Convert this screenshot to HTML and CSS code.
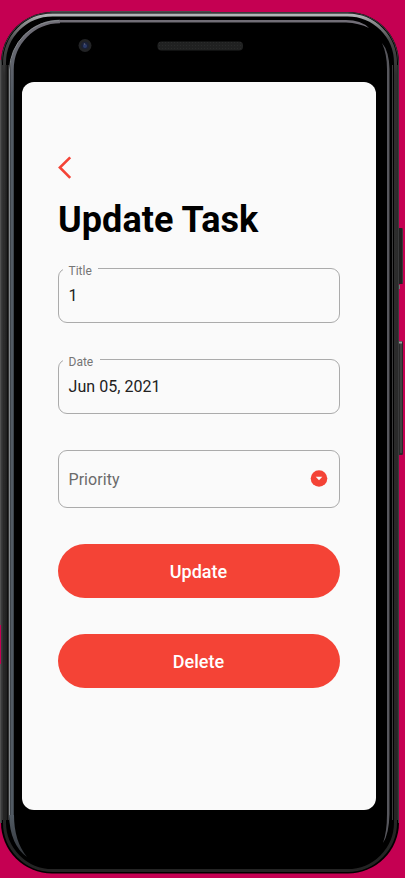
FILE: index.html
```html
<!DOCTYPE html>
<html lang="en">
<head>
<meta charset="utf-8">
<title>Update Task</title>
<link rel="stylesheet" href="styles.css">
</head>
<body>
<svg class="device" width="405" height="878" viewBox="0 0 405 878" aria-hidden="true">
  <defs>
    <linearGradient id="rim" x1="0" y1="0" x2="0" y2="1">
      <stop offset="0" stop-color="#b4b6b8"/>
      <stop offset=".008" stop-color="#8c8e90"/>
      <stop offset=".03" stop-color="#48494a"/>
      <stop offset=".07" stop-color="#2f2f2f"/>
      <stop offset="1" stop-color="#242424"/>
    </linearGradient>
    <linearGradient id="slate" gradientUnits="userSpaceOnUse" x1="0" y1="20" x2="0" y2="100">
      <stop offset="0" stop-color="#716e77"/>
      <stop offset="1" stop-color="#515a63"/>
    </linearGradient>
    <linearGradient id="fade" gradientUnits="userSpaceOnUse" x1="0" y1="815" x2="0" y2="858">
      <stop offset="0" stop-color="#515a63"/>
      <stop offset="1" stop-color="#303338"/>
    </linearGradient>
    <pattern id="mesh" width="3" height="3" patternUnits="userSpaceOnUse">
      <rect width="3" height="3" fill="#202121"/><rect width="1" height="1" fill="#2a2b2b"/>
    </pattern>
  </defs>
  <path d="M0 60h3v565H0zM0 664h3v159H0z" fill="#515151"/>
  <rect x="398" y="228" width="5" height="56" rx="1.5" fill="#202020"/>
  <path d="M402.500 229v54" stroke="#383838"/>
  <path d="M399.500 285v4" stroke="#777"/>
  <rect x="398" y="341" width="5" height="114" rx="1.5" fill="#292929"/>
  <path d="M401 343v110" stroke="#5a5a5a"/>
  <path d="M399 342.500h3" stroke="#999" stroke-width="2"/>
  <rect x="1" y="12" width="398" height="861.500" rx="51" fill="#000"/>
  <path d="M50 11.500H211" stroke="#4c4c4e"/>
  <path d="M1.500 823V63A50.500 50.500 0 0 1 52 12.500H348A50.500 50.500 0 0 1 398.500 63V823" fill="none" stroke="#3a3b3c"/>
  <rect x="4.500" y="15" width="391" height="855.500" rx="48" fill="none" stroke="url(#rim)" stroke-width="3"/>
  <path d="M2.500 65v755" stroke="#333"/>
  <path d="M6.500 65v755" stroke="#202020" stroke-width="2"/>
  <path d="M8.500 65v755" stroke="#303030"/>
  <path d="M397.500 65v755" stroke="#2a2a2a"/>
  <path d="M12 815V70A48 48 0 0 1 60 21.500" fill="none" stroke="url(#slate)" stroke-width="3.500"/>
  <path d="M9.500 815V70A50 50 0 0 1 60 20.500" fill="none" stroke="#858a8e"/>
  <path d="M9 815H14Q14 841 27 857Q10 845 9 815z" fill="url(#fade)"/>
  <path d="M59 20H346Q361 20 369 28Q359 23 346 22.500H59z" fill="#716e77"/>
  <path d="M382 43Q389 51 389.500 69V814Q389 834 383 843Q387 832 387 814V69Q387 54 382 43z" fill="#57575d"/>
  <path d="M392.500 65V820" stroke="#3b3b3c"/>
  <circle cx="85" cy="45.500" r="6.500" fill="#222325"/>
  <circle cx="85" cy="45.500" r="3.800" fill="#1a2036"/>
  <circle cx="85" cy="46" r="2" fill="#2b3a68"/>
  <circle cx="84.500" cy="44" r=".8" fill="#667"/>
  <rect x="157.500" y="41.500" width="85.500" height="9" rx="4" fill="url(#mesh)"/>
</svg>
<main class="screen">
  <svg class="back" width="16" height="24" viewBox="0 0 16 24" role="img" aria-label="Back"><path d="M13.200 2.300 2.900 12.500l10.300 10.300"/></svg>
  <h1>Update Task</h1>
  <form class="form">
    <div class="field"><span class="label">Title</span><span class="value">1</span></div>
    <div class="field"><span class="label label-date">Date</span><span class="value">Jun 05, 2021</span></div>
    <div class="field select"><span class="hint">Priority</span>
      <svg width="18" height="18" viewBox="0 0 18 18" aria-hidden="true"><circle cx="9" cy="8.500" r="8.300" fill="#f44336"/><path d="M5.700 6.800h6.600L9 10.200z" fill="#fafafa"/></svg>
    </div>
    <button type="button">Update</button>
    <button type="button">Delete</button>
  </form>
</main>
</body>
</html>
```
FILE: styles.css
```css
* { box-sizing: border-box; }
body {
  margin: 0;
  width: 405px;
  height: 878px;
  overflow: hidden;
  background: #c50052;
  font-family: Roboto, sans-serif;
  position: relative;
  padding: 82px 29px 68px 22px;
}
.device { position: absolute; inset: 0; }
.screen {
  position: relative;
  height: 728px;
  border-radius: 12px;
  background: #fafafa;
  padding: 73px 36.5px 0 35.5px;
}
.back { display: block; margin-left: -1px; }
.back path { fill: none; stroke: #f44336; stroke-width: 2.6; }
h1 {
  margin: 19px 0 0 0.5px;
  height: 44px;
  line-height: 44px;
  font-size: 36px;
  font-weight: 700;
  letter-spacing: 0.05px;
  color: #000;
  white-space: nowrap;
}
.form {
  display: flex;
  flex-direction: column;
  gap: 36px;
  margin-top: 26px;
}
.field {
  position: relative;
  height: 55px;
  border: 1px solid #ababab;
  border-radius: 9px;
  padding: 0 11px 0 10px;
  display: flex;
  align-items: center;
}
.label {
  position: absolute;
  left: 4px;
  top: -6px;
  width: 35px;
  padding-left: 6px;
  background: #fafafa;
  color: #757575;
  font-size: 12px;
  line-height: 16px;
}
.label-date { width: 37px; }
.value { color: #212121; font-size: 16px; letter-spacing: 0.05px; }
.select { height: 58px; justify-content: space-between; }
.hint { color: #6b6b6b; font-size: 16px; letter-spacing: 0.05px; }
button {
  height: 54px;
  border: 0;
  border-radius: 27px;
  background: #f44336;
  color: #fff;
  font: 500 18px Roboto, sans-serif;
}
```
